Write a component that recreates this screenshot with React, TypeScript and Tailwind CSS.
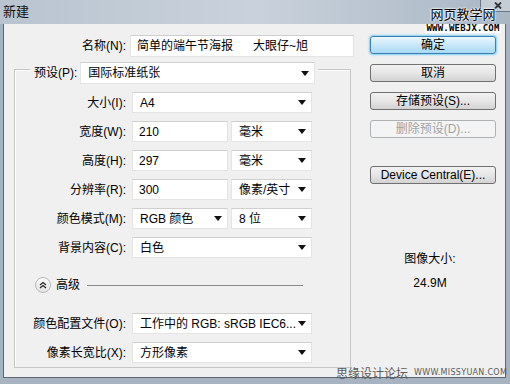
import React from "react";

const font = { fontFamily: '"Liberation Sans", "Noto Sans CJK SC", sans-serif' };

function Arrow() {
  return (
    <svg width="8" height="5" viewBox="0 0 8 5" className="shrink-0">
      <path d="M0 0H8L4 5Z" fill="#111" />
    </svg>
  );
}

function Select({ value, w }: { value: string; w: string }) {
  return (
    <div
      className={`${w} h-full flex items-center justify-between bg-white border border-[#e4e4e4] border-t-[#cfcfcf] pl-[7px] pr-[5px]`}
    >
      <span className="whitespace-nowrap overflow-hidden">{value}</span>
      <Arrow />
    </div>
  );
}

function Input({ value, w }: { value: string; w: string }) {
  return (
    <div className={`${w} h-full flex items-center bg-white border border-[#e4e4e4] border-t-[#cfcfcf] pl-[6px]`}>
      {value}
    </div>
  );
}

function Row({ label, children }: { label: string; children: React.ReactNode }) {
  return (
    <div className="flex items-center h-[21px]">
      <div className="w-[112px] text-right pr-[1px] whitespace-nowrap">{label}</div>
      <div className="ml-[5px] flex gap-[3px] h-full">{children}</div>
    </div>
  );
}

function Btn({ label, primary, disabled }: { label: string; primary?: boolean; disabled?: boolean }) {
  const base = "w-[126px] h-[18px] rounded-[3px] border flex items-center justify-center text-[12px]";
  if (primary)
    return (
      <div className={`${base} border-[#3c7fb1] bg-gradient-to-b from-[#eaf6fd] to-[#a7d9f5] shadow-[0_0_2px_1px_#7fd0f5]`}>
        {label}
      </div>
    );
  return (
    <div
      className={`${base} ${
        disabled
          ? "border-[#adb2b5] bg-[#f4f4f4] text-[#a3a3a3]"
          : "border-[#707070] bg-gradient-to-b from-[#f2f2f2] via-[#e6e6e6] to-[#d2d2d2]"
      }`}
    >
      {label}
    </div>
  );
}

export default function App() {
  return (
    <div className="relative w-[510px] h-[384px] overflow-hidden bg-[#a7b3c1] text-[12px] text-black" style={font}>
      {/* title bar */}
      <div className="h-[24px] flex items-center pl-[3px] bg-gradient-to-r from-[#b9c4d0] via-[#c9d2dc] to-[#a9b6c4]">
        <span className="text-[13px] text-[#111]">新建</span>
      </div>
      <div className="absolute right-[-6px] top-[-4px] w-[36px] h-[16px] rounded-[3px] border border-[#6b7784] bg-[#c4ccd6] flex items-end justify-center pb-[2px]">
        <svg width="8" height="7" viewBox="0 0 8 7">
          <path d="M1 0.5L7 6.5M7 0.5L1 6.5" stroke="#333" strokeWidth="1.8" />
        </svg>
      </div>
      {/* top watermark */}
      <div className="absolute left-[428px] top-[6px] w-[70px] flex flex-col items-center whitespace-nowrap">
        <div className="text-[13px] leading-[16px] text-black [text-shadow:0_0_2px_#fff,0_0_2px_#fff,0_0_2px_#fff]" style={{ fontFamily: '"Noto Sans CJK SC", sans-serif' }}>
          网页教学网
        </div>
        <div className="mt-[2px] bg-white px-[1px] text-[9px] leading-[9px] font-bold tracking-[0.2px] text-black" style={{ fontFamily: '"DejaVu Sans Mono", monospace' }}>
          WWW.WEBJX.COM
        </div>
      </div>

      {/* body */}
      <div className="ml-[3px] mr-[4px] h-[354px] border-l border-r border-b border-[#5d6773] bg-[#f0f0f0] flex">
        {/* left column */}
        <div className="w-[350px] pl-[10px]">
          <div className="flex items-center h-[22px] mt-[11px]">
            <div className="w-[112px] text-right">名称(N):</div>
            <div className="ml-[4px] w-[224px] h-full flex items-center bg-white border border-[#e4e4e4] border-t-[#cfcfcf] pl-[6px] whitespace-pre">
              简单的端午节海报      大眼仔~旭
            </div>
          </div>

          {/* group box */}
          <div className="relative mt-[12px] w-[337px] h-[299px] border border-[#c6c6c6] shadow-[inset_1px_1px_0_#fff]">
            <div className="absolute left-[15px] top-[-8px] h-[22px] flex items-center bg-[#f0f0f0] pl-[4px] pr-[3px]">
              <span className="whitespace-nowrap">预设(P):</span>
              <div className="ml-[3px] h-full">
                <Select value="国际标准纸张" w="w-[235px]" />
              </div>
            </div>

            <div className="pt-[22px] flex flex-col gap-[8px]">
              <Row label="大小(I):">
                <Select value="A4" w="w-[180px]" />
              </Row>
              <Row label="宽度(W):">
                <Input value="210" w="w-[96px]" />
                <Select value="毫米" w="w-[81px]" />
              </Row>
              <Row label="高度(H):">
                <Input value="297" w="w-[96px]" />
                <Select value="毫米" w="w-[81px]" />
              </Row>
              <Row label="分辨率(R):">
                <Input value="300" w="w-[96px]" />
                <Select value="像素/英寸" w="w-[81px]" />
              </Row>
              <Row label="颜色模式(M):">
                <Select value="RGB 颜色" w="w-[96px]" />
                <Select value="8 位" w="w-[81px]" />
              </Row>
              <Row label="背景内容(C):">
                <Select value="白色" w="w-[180px]" />
              </Row>
            </div>

            {/* advanced */}
            <div className="mt-[19px] h-[16px] flex items-center pl-[20px]">
              <div className="w-[16px] h-[16px] rounded-full border border-[#b9b9b9] bg-gradient-to-b from-[#fdfdfd] to-[#e3e3e3] flex items-center justify-center">
                <svg width="8" height="8" viewBox="0 0 8 8">
                  <path d="M1 4L4 1.5L7 4M1 7L4 4.5L7 7" fill="none" stroke="#222" strokeWidth="1.2" />
                </svg>
              </div>
              <span className="ml-[5px]">高级</span>
              <div className="ml-[7px] w-[216px] h-px bg-[#8a8a8a]" />
            </div>

            <div className="mt-[20px] flex flex-col gap-[8px]">
              <Row label="颜色配置文件(O):">
                <Select value="工作中的 RGB: sRGB IEC6..." w="w-[180px]" />
              </Row>
              <Row label="像素长宽比(X):">
                <Select value="方形像素" w="w-[180px]" />
              </Row>
            </div>
          </div>
        </div>

        {/* right column */}
        <div className="ml-[16px] pt-[12px] flex flex-col">
          <div className="flex flex-col gap-[10px]">
            <Btn label="确定" primary />
            <Btn label="取消" />
            <Btn label="存储预设(S)..." />
            <Btn label="删除预设(D)..." disabled />
          </div>
          <div className="mt-[28px]">
            <Btn label="Device Central(E)..." />
          </div>
          <div className="mt-[67px] flex flex-col items-center w-[120px]">
            <div className="leading-[16px]">图像大小:</div>
            <div className="mt-[8px] leading-[16px]">24.9M</div>
          </div>
        </div>
      </div>

      {/* bottom watermark */}
      <div className="absolute left-[336px] top-[366px] flex items-center gap-[6px] whitespace-nowrap leading-[14px] text-[#5a5a5a]">
        <span className="text-[12px]" style={{ fontFamily: '"Noto Sans CJK SC", sans-serif' }}>思缘设计论坛</span>
        <span className="text-[8px] tracking-[0.3px]" style={{ fontFamily: '"DejaVu Sans", sans-serif' }}>WWW.MISSYUAN.COM</span>
      </div>
    </div>
  );
}
